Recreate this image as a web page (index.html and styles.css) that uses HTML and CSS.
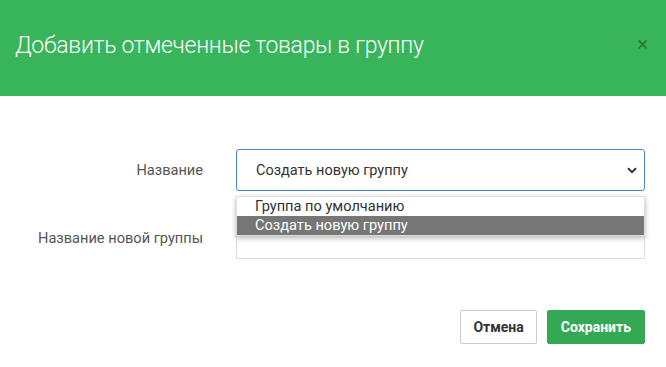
FILE: index.html
```html
<!DOCTYPE html>
<html lang="ru">
<head>
    <meta charset="UTF-8">
    <meta name="viewport" content="width=device-width, initial-scale=1.0">
    <title>Добавить отмеченные товары в группу</title>
    <link rel="stylesheet" href="styles.css">
</head>
<body>
    <div class="modal">
        <div class="modal-header">
            <h2>Добавить отмеченные товары в группу</h2>
            <span class="close">&times;</span>
        </div>
        <div class="modal-body">
            <div class="row">
                <label>Название</label>
                <div class="field">
                    <div class="select">
                        <span>Создать новую группу</span>
                        <svg class="chevron" width="10" height="7" viewBox="0 0 10 7">
                            <path d="M1 1.2 L5 5.2 L9 1.2" fill="none" stroke="#333" stroke-width="2"/>
                        </svg>
                    </div>
                    <ul class="options">
                        <li>Группа по умолчанию</li>
                        <li class="active">Создать новую группу</li>
                    </ul>
                </div>
            </div>
            <div class="row">
                <label>Название новой группы</label>
                <div class="field">
                    <input type="text" class="input">
                </div>
            </div>
        </div>
        <div class="modal-footer">
            <button class="btn btn-default">Отмена</button>
            <button class="btn btn-success">Сохранить</button>
        </div>
    </div>
</body>
</html>
```

FILE: styles.css
```css
body {
    margin: 0;
    font-family: Roboto, "Liberation Sans", sans-serif;
    background-color: #fff;
}
.modal {
    width: 666px;
    height: 367px;
}
.modal-header {
    height: 96px;
    background-color: #38b55a;
    display: flex;
    align-items: center;
    justify-content: space-between;
    padding: 0 18px 0 15px;
    box-sizing: border-box;
}
.modal-header h2 {
    margin: 0 0 6px 0;
    font-size: 23px;
    font-weight: 300;
    color: #fff;
    letter-spacing: -0.3px;
}
.close {
    color: #237a3b;
    font-size: 20px;
    margin-bottom: 8px;
}
.modal-body {
    padding: 53px 21px 0 0;
}
.row {
    display: flex;
    align-items: center;
    margin-bottom: 26px;
}
.row label {
    width: 203px;
    text-align: right;
    padding-right: 33px;
    font-size: 14.6px;
    color: #555;
}
.field {
    flex: 1;
    position: relative;
}
.select {
    height: 42px;
    border: 1px solid #4f86cf;
    border-radius: 3px;
    box-sizing: border-box;
    display: flex;
    align-items: center;
    justify-content: space-between;
    padding: 0 7px 0 19px;
    font-size: 14.5px;
    color: #333;
}
.options {
    position: absolute;
    top: 47px;
    left: 0;
    right: 0;
    margin: 0;
    padding: 0;
    list-style: none;
    background: #fff;
    border: 1px solid #ddd;
    box-shadow: 0 2px 5px rgba(0, 0, 0, 0.3);
    font-size: 14.6px;
    color: #333;
    z-index: 2;
}
.options li {
    height: 19px;
    line-height: 18px;
    padding-left: 18px;
}
.options li.active {
    background-color: #767676;
    color: #fff;
}
.input {
    display: block;
    width: 100%;
    height: 42px;
    border: 1px solid #ddd;
    box-sizing: border-box;
    margin: 0;
}
.modal-footer {
    display: flex;
    justify-content: flex-end;
    gap: 10px;
    padding: 25px 21px 0 0;
}
.btn {
    height: 34px;
    padding: 0 12px;
    font-family: Roboto, "Liberation Sans", sans-serif;
    font-size: 14px;
    font-weight: 700;
    border-radius: 2px;
    cursor: pointer;
}
.btn-default {
    background-color: #fff;
    border: 1px solid #ccc;
    color: #333;
}
.btn-success {
    padding: 0 13px;
    background-color: #35a853;
    border: 1px solid #35a853;
    color: #fff;
}
```
